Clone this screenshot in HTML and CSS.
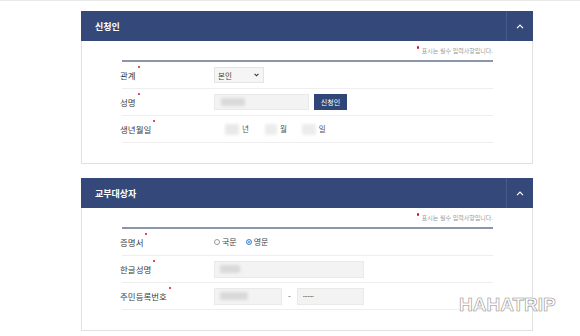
FILE: index.html
```html
<!DOCTYPE html>
<html lang="ko">
<head>
<meta charset="utf-8">
<link rel="stylesheet" href="styles.css">
</head>
<body>
<div class="topline"></div>

<section class="card">
  <div class="card-head">
    <h2 class="card-title">신청인</h2>
    <div class="toggle"><svg width="8" height="5" viewBox="0 0 8 5"><path d="M1 4.2 L4 1.2 L7 4.2" fill="none" stroke="#fff" stroke-width="1.2"/></svg></div>
  </div>
  <div class="card-body">
    <p class="note"><span class="dot"></span>표시는 필수 입력사항입니다.</p>
    <div class="form">
      <div class="row">
        <div class="label req">관계</div>
        <div class="field">
          <div class="select">본인<svg class="caret" width="5" height="4" viewBox="0 0 5 4"><path d="M0.6 0.8 L2.5 2.8 L4.4 0.8" fill="none" stroke="#333" stroke-width="1.1"/></svg></div>
        </div>
      </div>
      <div class="row">
        <div class="label req">성명</div>
        <div class="field">
          <div class="input w-name"><span class="blur b-name"></span></div>
          <button class="btn">신청인</button>
        </div>
      </div>
      <div class="row">
        <div class="label req">생년월일</div>
        <div class="field date">
          <span class="blur b-y"></span><span class="unit">년</span>
          <span class="blur b-m"></span><span class="unit">월</span>
          <span class="blur b-d"></span><span class="unit">일</span>
        </div>
      </div>
    </div>
  </div>
</section>

<section class="card second">
  <div class="card-head">
    <h2 class="card-title">교부대상자</h2>
    <div class="toggle"><svg width="8" height="5" viewBox="0 0 8 5"><path d="M1 4.2 L4 1.2 L7 4.2" fill="none" stroke="#fff" stroke-width="1.2"/></svg></div>
  </div>
  <div class="card-body">
    <p class="note"><span class="dot"></span>표시는 필수 입력사항입니다.</p>
    <div class="form">
      <div class="row">
        <div class="label req">증명서</div>
        <div class="field radios">
          <span class="radio"></span><span class="rtext">국문</span>
          <span class="radio on"></span><span class="rtext">영문</span>
        </div>
      </div>
      <div class="row">
        <div class="label req">한글성명</div>
        <div class="field">
          <div class="input w-long"><span class="blur b-kname"></span></div>
        </div>
      </div>
      <div class="row">
        <div class="label req">주민등록번호</div>
        <div class="field">
          <div class="input w-rrn"><span class="blur b-rrn"></span></div>
          <span class="dash">-</span>
          <div class="input w-rrn2"><span class="mask">•••••••</span></div>
        </div>
      </div>
    </div>
  </div>
</section>

<div class="watermark">HAHATRIP</div>
</body>
</html>
```

FILE: styles.css
```css
* { box-sizing: border-box; }
html, body { margin: 0; padding: 0; background: #fff; }
body {
  font-family: "Noto Sans CJK KR", "Noto Sans", sans-serif;
  color: #444;
  width: 580px;
  height: 336px;
  overflow: hidden;
  position: relative;
}
.topline { height: 1px; background: #e8e8e8; }

.card {
  margin: 10px 0 0 81px;
  width: 452px;
  border: 1px solid #e1e1e1;
}
.card.second { margin-top: 14px; }

.card-head {
  height: 30px;
  margin: -1px -1px 0;
  background: #34497a;
  display: flex;
  align-items: center;
}
.card-title {
  margin: 0 0 0 14px;
  font-size: 9px;
  font-weight: 700;
  color: #fff;
  line-height: 1;
}
.toggle {
  margin-left: auto;
  width: 27px;
  height: 100%;
  border-left: 1px solid rgba(255,255,255,0.1);
  display: flex;
  align-items: center;
  justify-content: center;
}

.card-body { padding: 0 39px 20px 40px; }
.note {
  margin: 5px 0 4px;
  height: 10px;
  line-height: 10px;
  font-size: 6px;
  color: #999;
  text-align: right;
}
.note .dot {
  display: inline-block;
  width: 2px; height: 2.5px;
  background: #d2102c;
  border-radius: 1px;
  vertical-align: top;
  margin: 0 3px 0 0;
}

.form { border-top: 2px solid #8c96ab; }
.row {
  height: 27px;
  border-bottom: 1px solid #eeeeee;
  display: flex;
  align-items: center;
}
.label {
  width: 94px;
  font-size: 8.5px;
  color: #3c3c3c;
  line-height: 1;
  margin-left: -2px;
  padding-right: 2px;
}
.label.req::after {
  content: "";
  display: inline-block;
  width: 2px; height: 2.5px;
  border-radius: 1px;
  background: #d2102c;
  vertical-align: top;
  margin: -5px 0 0 2px;
}
.field { display: flex; align-items: center; }

.select {
  width: 50px; height: 16px;
  background: #f5f5f5;
  border: 1px solid #e4e4e4;
  font-size: 7.5px;
  color: #444;
  display: flex;
  align-items: center;
  padding: 0 4px 0 3px;
}
.select .caret { margin-left: auto; }

.input {
  height: 17px;
  background: #f3f3f3;
  border: 1px solid #e9e9e9;
  display: flex;
  align-items: center;
}
.w-name { width: 95px; height: 16px; }
.w-long { width: 150px; }
.w-rrn { width: 68px; }
.w-rrn2 { width: 67px; }

.btn {
  margin-left: 5px;
  width: 33px; height: 16px;
  border: 0;
  background: #2f4677;
  color: #fff;
  font-family: inherit;
  font-size: 7px;
  padding: 0;
  line-height: 16px;
}

.blur {
  display: inline-block;
  background: #d9d9d9;
  filter: blur(1.6px);
  border-radius: 2px;
}
.b-name { width: 24px; height: 8px; margin-left: 6px; }
.b-kname { width: 20px; height: 8px; margin-left: 5px; }
.b-rrn { width: 28px; height: 8px; margin-left: 5px; }
.b-y { width: 14px; height: 11px; margin-left: 11px; background: #e9e9e9; }
.b-m { width: 12px; height: 11px; margin-left: 16px; background: #ececec; }
.b-d { width: 14px; height: 11px; margin-left: 15px; background: #ececec; }
.date .unit { font-size: 7.5px; color: #555; margin-left: 3px; line-height: 1; }

.mask { font-size: 4px; color: #555; margin-left: 5px; letter-spacing: 0.2px; line-height: 1; }
.dash { width: 15px; text-align: center; font-size: 8px; color: #555; }

.radios { font-size: 8px; color: #444; }
.radio {
  width: 6px; height: 6px;
  border-radius: 50%;
  border: 1px solid #9a9a9a;
  background: #fff;
}
.radio.on {
  border: 1.5px solid #4a8fe7;
  background: #4a8fe7;
  box-shadow: inset 0 0 0 1px #fff;
  margin-left: 9px;
}
.rtext { margin-left: 2px; line-height: 1; }

.watermark {
  position: absolute;
  left: 459px;
  top: 295px;
  font-family: "Liberation Sans", Arial, sans-serif;
  font-weight: 700;
  font-size: 19px;
  line-height: 1;
  color: #fff;
  -webkit-text-stroke: 0.6px #8f8f8f;
}
```
